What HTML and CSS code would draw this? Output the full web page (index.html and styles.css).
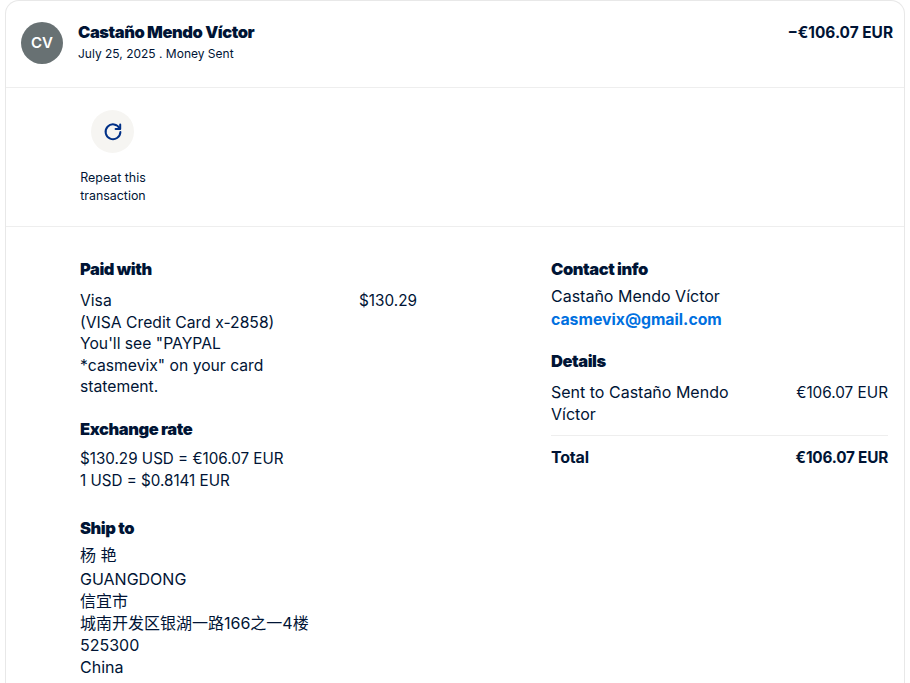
FILE: index.html
```html
<!DOCTYPE html>
<html>
<head>
  <title>Transaction details</title>
  <meta charset="UTF-8">
  <meta name="viewport" content="width=device-width, initial-scale=1.0">
  <link rel="stylesheet" href="styles.css">
</head>
<body>
  <div class="card">
    <!-- Summary -->
    <div class="summary">
      <div class="avatar">CV</div>
      <div class="who">
        <div class="name">Castaño Mendo Víctor</div>
        <div class="meta">July 25, 2025 . Money Sent</div>
      </div>
      <div class="net">−€106.07 EUR</div>
    </div>

    <!-- Actions -->
    <div class="actions">
      <div class="action">
        <div class="action-icon">
          <svg width="20" height="20" viewBox="0 0 20 20" fill="none" stroke="#003087" stroke-width="2" stroke-linecap="round" stroke-linejoin="round">
            <path d="M16.6 6.4A7.4 7.4 0 1 0 17.4 10"/>
            <path d="M17.2 2.4v4.6h-4.6"/>
          </svg>
        </div>
        <div class="action-label">Repeat this transaction</div>
      </div>
    </div>

    <!-- Details -->
    <div class="details">
      <div class="col">
        <div class="section section-paid">
          <h3>Paid with</h3>
          <div class="row">
            <div class="wrap">Visa<br>(VISA Credit Card x-2858)<br>You'll see "PAYPAL *casmevix" on your card statement.</div>
            <div class="amount">$130.29</div>
          </div>
        </div>
        <div class="section section-rate">
          <h3>Exchange rate</h3>
          <div>$130.29 USD = €106.07 EUR<br>1 USD = $0.8141 EUR</div>
        </div>
        <div class="section section-ship">
          <h3>Ship to</h3>
          <div class="ship-name">杨 艳</div>
          <div>GUANGDONG<br>信宜市<br>城南开发区银湖一路166之一4楼<br>525300<br>China</div>
        </div>
      </div>

      <div class="col">
        <div class="section section-contact">
          <h3>Contact info</h3>
          <div>Castaño Mendo Víctor<br><a href="#">casmevix@gmail.com</a></div>
        </div>
        <div class="section section-details">
          <h3>Details</h3>
          <div class="row row-line">
            <div class="wrap">Sent to Castaño Mendo Víctor</div>
            <div class="amount">€106.07 EUR</div>
          </div>
          <div class="row row-total">
            <div>Total</div>
            <div class="amount">€106.07 EUR</div>
          </div>
        </div>
      </div>
    </div>
  </div>
</body>
</html>
```

FILE: styles.css
```css
html, body { height: 100%; }
body { margin: 0; padding: 0 5px; background: #fff; color: #001435; font-family: Inter, "Noto Sans CJK SC", sans-serif; font-size: 16px; line-height: 21.8px; overflow: hidden; }
.card { width: 900px; height: 100%; box-sizing: border-box; border: 1px solid #e8e8e8; border-bottom: none; border-radius: 14px 14px 0 0; overflow: hidden; }
.summary { display: flex; align-items: flex-start; height: 87px; box-sizing: border-box; padding: 21px 11px 0 15px; border-bottom: 1px solid #eeeeee; }
.avatar { width: 42px; height: 42px; border-radius: 50%; background: #687173; color: #fff; font-size: 15px; font-weight: 600; line-height: 42px; text-align: center; }
.who { flex: 1; margin-left: 15px; margin-top: -1px; }
.name { font-size: 16.5px; font-weight: 900; line-height: 22px; letter-spacing: -0.45px; }
.meta { font-size: 12px; line-height: 20px; margin-top: 1px; }
.net { font-size: 15.4px; font-weight: 700; line-height: 22px; }
.actions { height: 139px; box-sizing: border-box; padding: 22px 0 0 74px; border-bottom: 1px solid #eeeeee; }
.action { width: 66px; }
.action-icon { width: 43px; height: 43px; margin-left: 11px; border-radius: 50%; background: #f6f5f2; display: flex; align-items: center; justify-content: center; }
.action-label { font-size: 12.4px; line-height: 18px; text-align: center; margin-top: 16px; }
.details { display: grid; grid-template-columns: 337px 337px; column-gap: 134px; padding: 32px 0 0 74px; }
h3 { margin: 0 0 10px; font-size: 16.5px; line-height: 21px; font-weight: 900; letter-spacing: -0.45px; }
.section-paid { font-size: 15.7px; line-height: 21.6px; margin-bottom: 21px; }
.section-rate { font-size: 15.2px; margin-bottom: 26px; }
.section-rate h3 { margin-bottom: 8px; }
.section-ship { line-height: 22px; }
.section-ship h3 { margin-bottom: 5px; }
.ship-name { margin-bottom: 2px; }
.section-contact { line-height: 22.6px; margin-bottom: 20px; }
.section-contact h3 { line-height: 21px; margin-bottom: 5px; }
.row { display: flex; justify-content: space-between; align-items: baseline; }
.wrap { width: 200px; }
.amount { font-size: 15.3px; }
a { color: #0070e0; font-size: 15.8px; font-weight: 700; text-decoration: none; }
.section-details { line-height: 22px; }
.section-details h3 { margin-bottom: 9px; }
.row-line { padding: 0 0 10px; border-bottom: 1px solid #eeeeee; }
.row-total { font-weight: 700; padding-top: 10px; letter-spacing: -0.2px; }
```
